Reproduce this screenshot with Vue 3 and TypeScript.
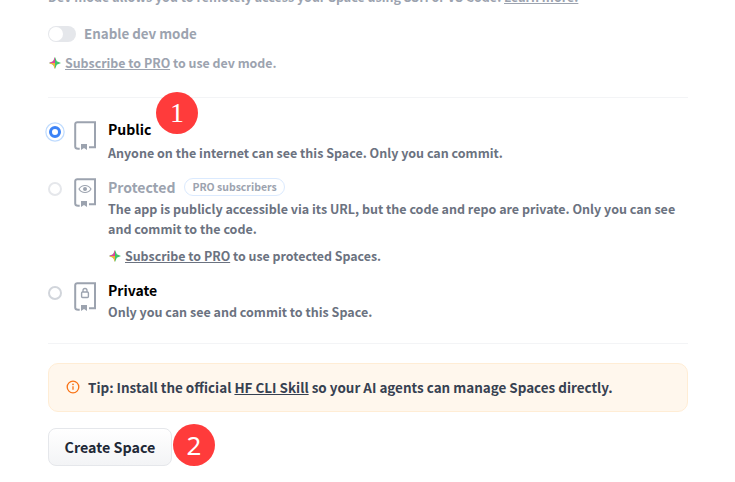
<script setup lang="ts">
const book = 'M1.200 25.500V3.200a2 2 0 0 1 2-2H21v25h-6M1.200 25.500c0 1.400 1 2.300 3 2.300h1.500';
</script>

<template>
  <div class="page">
    <p class="clip">Dev mode allows you to remotely access your Space using SSH or VS Code. <a>Learn more.</a></p>
    <div class="dev">
      <div class="toggle-row">
        <span class="toggle"><span class="knob"></span></span>
        <span class="toggle-label">Enable dev mode</span>
      </div>
      <div class="sub sub-muted">
        <svg class="spark" viewBox="0 0 12 12"><path d="M6 0 7.800 4.200 12 6 7.800 7.800 6 12 4.200 7.800 0 6 4.200 4.200Z" fill="#3fc46a"/><path d="M6 0 4.200 4.200 0 6 6 6Z" fill="#e43f9f"/><path d="M0 6 4.200 7.800 6 12 6 6Z" fill="#f4b13c"/></svg>
        <span><a>Subscribe to PRO</a> to use dev mode.</span>
      </div>
    </div>
    <hr class="rule rule-top" />
    <div class="options">
      <div class="option opt-public">
        <span class="radio checked"></span>
        <svg class="book" viewBox="0 0 22 29" fill="none"><path :d="book" stroke="#9ca3af" stroke-width="2"/><path d="M7 23h6v6l-3-2-3 2Z" fill="#9ca3af"/></svg>
        <div class="body">
          <div class="title">Public</div>
          <div class="desc desc-public">Anyone on the internet can see this Space. Only you can commit.</div>
        </div>
      </div>
      <div class="option opt-protected">
        <span class="radio disabled"></span>
        <svg class="book" viewBox="0 0 22 29" fill="none"><path :d="book" stroke="#9ca3af" stroke-width="2"/><path d="M7 23h6v6l-3-2-3 2Z" fill="#9ca3af"/><path d="M5 11C6.500 8.500 9 7.500 11 7.500s4.500 1 6 3.500C15.500 13.500 13 14.500 11 14.500S6.500 13.500 5 11Z" stroke="#9ca3af" stroke-width="1.200"/><circle cx="11" cy="11" r="2" fill="#9ca3af"/></svg>
        <div class="body">
          <div class="title-row">
            <span class="title muted">Protected</span>
            <span class="pill">PRO subscribers</span>
          </div>
          <div class="desc desc-protected">The app is publicly accessible via its URL, but the code and repo are private. Only you can see and commit to the code.</div>
          <div class="sub sub-inner">
            <svg class="spark" viewBox="0 0 12 12"><path d="M6 0 7.800 4.200 12 6 7.800 7.800 6 12 4.200 7.800 0 6 4.200 4.200Z" fill="#3fc46a"/><path d="M6 0 4.200 4.200 0 6 6 6Z" fill="#e43f9f"/><path d="M0 6 4.200 7.800 6 12 6 6Z" fill="#f4b13c"/></svg>
            <span><a>Subscribe to PRO</a> to use protected Spaces.</span>
          </div>
        </div>
      </div>
      <div class="option opt-private">
        <span class="radio"></span>
        <svg class="book" viewBox="0 0 22 29" fill="none"><path :d="book" stroke="#9ca3af" stroke-width="2"/><path d="M7 23h6v6l-3-2-3 2Z" fill="#9ca3af"/><rect x="7.600" y="10" width="6.800" height="5.500" rx="1" stroke="#9ca3af" stroke-width="1.400"/><path d="M9 10V8.500a2 2 0 0 1 4 0V10" stroke="#9ca3af" stroke-width="1.300"/></svg>
        <div class="body">
          <div class="title">Private</div>
          <div class="desc desc-private">Only you can see and commit to this Space.</div>
        </div>
      </div>
    </div>
    <hr class="rule rule-bottom" />
    <div class="tip">
      <svg class="info" viewBox="0 0 14 14" fill="none"><circle cx="7" cy="7" r="5.800" stroke="#f97316" stroke-width="1.300"/><path d="M7 6.200v3.600" stroke="#f97316" stroke-width="1.300"/><circle cx="7" cy="4.300" r=".9" fill="#f97316"/></svg>
      <span>Tip: Install the official <a>HF CLI Skill</a> so your AI agents can manage Spaces directly.</span>
    </div>
    <div class="actions">
      <button class="create">Create Space</button>
      <span class="marker marker-2">2</span>
    </div>
    <span class="marker marker-1">1</span>
  </div>
</template>

<style>
html, body { margin: 0; background: #fff; overflow: hidden; }
</style>

<style scoped>
.page {
  position: relative;
  width: 735px;
  height: 482px;
  overflow: hidden;
  box-sizing: border-box;
  padding: 0 47px 0 48px;
  font-family: "Noto Sans CJK JP", "Noto Sans CJK SC", sans-serif;
  font-size: 12.500px;
  font-weight: 700;
  color: #6b7280;
  line-height: 20px;
}
a { text-decoration: underline; }
.clip { margin: -13px 0 0; color: #9ca3af; height: 20px; }
.dev { margin-top: 15px; }
.toggle-row { display: flex; align-items: center; gap: 8px; height: 24px; }
.toggle { width: 28px; height: 16px; border-radius: 8px; background: #e5e7eb; display: flex; align-items: center; padding-left: 1px; box-sizing: border-box; }
.knob { width: 14px; height: 14px; border-radius: 50%; background: #fff; }
.toggle-label { color: #9ca3af; font-size: 13.350px; }
.sub { display: flex; align-items: center; height: 20px; font-size: 12.400px; }
.sub-muted { color: #9ca3af; margin-top: 7px; }
.sub-inner { margin-top: 7px; color: #6b7280; margin-left: 1px; }
.spark { width: 12px; height: 12px; flex: none; margin-right: 4px; }
.sub-muted .spark { margin-left: 1px; }
.rule { border: 0; height: 1px; background: #f3f4f6; margin: 0; }
.rule-top { margin-top: 24px; }
.rule-bottom { margin-top: 21px; }
.options { display: flex; flex-direction: column; }
.option { display: flex; align-items: flex-start; }
.opt-public { margin-top: 23px; }
.opt-protected { margin-top: 15px; }
.opt-private { margin-top: 16px; }
.radio { width: 14px; height: 14px; border-radius: 50%; border: 2px solid #d1d5db; box-sizing: border-box; margin-top: 4px; flex: none; }
.radio.disabled { border-color: #e5e7eb; }
.radio.checked { width: 12px; height: 12px; margin: 5px 1px 1px; border: 3.500px solid #3b82f6; background: #fff; box-shadow: 0 0 0 2.500px #fff, 0 0 0 3.750px #bfdbfe; }
.book { width: 22px; height: 29px; margin-left: 12px; flex: none; }
.body { margin: -1px 0 0 12px; flex: 1; min-width: 0; }
.opt-public .body, .opt-private .body { margin-top: -2px; }
.title { color: #000; font-size: 14px; line-height: 20px; }
.title.muted { color: #9ca3af; }
.title-row { display: flex; align-items: center; gap: 9px; height: 20px; }
.pill { border: 1px solid #dbeafe; border-radius: 9px; height: 18px; line-height: 16px; font-size: 10.500px; color: #9ca3af; padding: 0 7px; box-sizing: border-box; }
.desc { line-height: 20px; }
.desc-public { margin-top: 4px; }
.desc-protected { margin-top: 2px; }
.desc-private { margin-top: 2px; }
.tip {
  margin-top: 19px;
  height: 49px;
  box-sizing: border-box;
  display: flex;
  align-items: center;
  gap: 8px;
  padding: 0 0 2px 17px;
  background: #fff7ed;
  border: 1px solid #ffedd5;
  border-radius: 10px;
  color: #374151;
  font-size: 13.450px;
}
.info { width: 14px; height: 14px; flex: none; }
.actions { display: flex; align-items: center; margin-top: 16px; }
.create {
  width: 124px;
  height: 38px;
  box-sizing: border-box;
  border: 1px solid #e5e7eb;
  border-radius: 8px;
  background: linear-gradient(#fff, #f3f4f6);
  color: #1f2937;
  font: inherit;
  font-size: 14.300px;
  padding: 0;
}
.marker {
  width: 42px;
  height: 42px;
  border-radius: 50%;
  background: #ff3b3b;
  color: #fff;
  display: flex;
  align-items: center;
  justify-content: center;
  font-family: "Liberation Serif", serif;
  font-weight: 400;
  font-size: 28px;
}
.marker-1 { position: absolute; left: 156px; top: 92px; }
.marker-2 { margin: -4px 0 0 1px; font-family: "Noto Sans", sans-serif; font-size: 26px; }
</style>
